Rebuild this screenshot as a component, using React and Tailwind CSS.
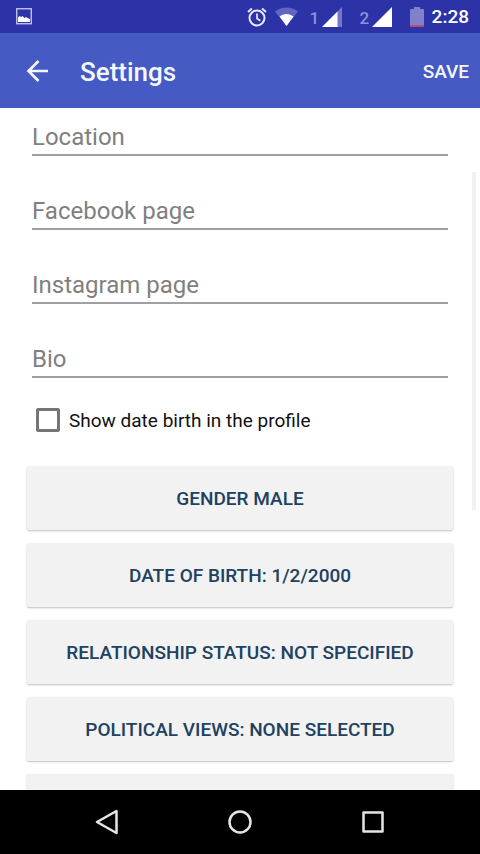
const fields = [
  { id: 'location', label: 'Location' },
  { id: 'facebook', label: 'Facebook page' },
  { id: 'instagram', label: 'Instagram page' },
  { id: 'bio', label: 'Bio' },
];

const options = [
  'Gender Male',
  'Date of birth: 1/2/2000',
  'Relationship status: Not specified',
  'Political views: None selected',
];

function PictureIcon() {
  return (
    <svg width="16" height="17" viewBox="0 0 16 17" aria-hidden="true">
      <rect x="0.75" y="0.75" width="14.5" height="15" fill="none" stroke="#c9cdf0" strokeWidth="1.3" />
      <path d="M2 14V9.500l1.500-1.500 1.500 1L6.500 8l2 2 1.500-1 1.500 1 2.500 1v3z" fill="#fff" />
    </svg>
  );
}

function AlarmIcon() {
  return (
    <svg width="20" height="20" viewBox="0 0 20 20" fill="none" stroke="#e8eaff" aria-hidden="true">
      <circle cx="10" cy="11" r="7.5" strokeWidth="2" />
      <path d="M10 6.5v5l3.4 2.2" strokeWidth="1.7" />
      <path d="M1 5l4-3.5M19 5l-4-3.5" strokeWidth="2" />
    </svg>
  );
}

function WifiIcon() {
  return (
    <svg width="23" height="19" viewBox="0 0 23 19" aria-hidden="true">
      <path d="M0 4.5C6.5-1 16.5-1 23 4.5L11.5 19z" fill="#6065c4" />
      <path d="M4.500 9.600c4-3.600 10-3.600 14 0L11.500 19z" fill="#fff" />
    </svg>
  );
}

function SignalIcon({ full }) {
  return (
    <svg width="20" height="20" viewBox="0 0 20 20" aria-hidden="true">
      <path d="M20 0v20H0z" fill={full ? '#fff' : '#7277cb'} />
      {!full && <path d="M15.500 4.500V20H0z" fill="#fff" />}
    </svg>
  );
}

function BatteryIcon() {
  return (
    <svg width="14" height="20" viewBox="0 0 14 20" aria-hidden="true">
      <path d="M4 0h6v2h3q1 0 1 1v15H0V3q0-1 1-1h3z" fill="#7f82cb" />
      <path d="M0 18h14v1q0 1-1 1H1q-1 0-1-1z" fill="#b4526e" />
    </svg>
  );
}

function StatusBar() {
  return (
    <div className="flex h-[33px] shrink-0 items-center justify-between bg-[#2c33a7] pr-[11px] pl-4 text-white">
      <PictureIcon />
      <div className="flex items-center">
        <AlarmIcon />
        <div className="ml-2 flex"><WifiIcon /></div>
        <div className="ml-3 flex items-center gap-1">
          <span className="w-2 pt-0.5 text-[17px] leading-6 font-medium text-[#8d91dc]">1</span>
          <SignalIcon />
        </div>
        <div className="ml-[18px] flex items-center gap-1">
          <span className="w-2 pt-0.5 text-[17px] leading-6 font-medium text-[#8d91dc]">2</span>
          <SignalIcon full />
        </div>
        <div className="mr-2 ml-[18px] flex"><BatteryIcon /></div>
        <span className="text-[19px] leading-6 font-medium">2:28</span>
      </div>
    </div>
  );
}

function Header() {
  return (
    <header className="flex h-[75px] shrink-0 items-center bg-[#455bc3] pr-[11px] pl-6 text-[#f4f7ff]">
      <button type="button" aria-label="Back" className="flex w-14 items-center">
        <svg width="26" height="26" viewBox="0 0 26 26" fill="none" stroke="#f4f7ff" strokeWidth="2.600" aria-hidden="true">
          <path d="M24 13H5M14.500 3l-10 10 10 10" />
        </svg>
      </button>
      <h1 className="pt-0.5 text-[26px] leading-8 font-medium">Settings</h1>
      <button type="button" className="ml-auto pt-0.5 text-[19px] leading-6 font-medium uppercase">Save</button>
    </header>
  );
}

function NavBar() {
  return (
    <nav className="flex h-16 shrink-0 items-center justify-center gap-[109px] bg-black">
      <button type="button" aria-label="Back">
        <svg width="24" height="26" viewBox="0 0 24 26" fill="none" stroke="#e6e6e6" strokeWidth="2.500" strokeLinejoin="round" aria-hidden="true">
          <path d="M21.500 2v22L2 13z" />
        </svg>
      </button>
      <button type="button" aria-label="Home">
        <svg width="24" height="24" viewBox="0 0 24 24" fill="none" stroke="#e6e6e6" strokeWidth="2.500" aria-hidden="true">
          <circle cx="12" cy="12" r="10.500" />
        </svg>
      </button>
      <button type="button" aria-label="Recent apps">
        <svg width="24" height="24" viewBox="0 0 24 24" fill="none" stroke="#e6e6e6" strokeWidth="2.500" strokeLinejoin="round" aria-hidden="true">
          <rect x="2.500" y="2.500" width="19" height="19" />
        </svg>
      </button>
    </nav>
  );
}

const optionClass =
  'h-16 shrink-0 rounded-xs bg-[#f2f2f2] pt-0.5 text-[19px] leading-6 font-medium text-[#20415f] uppercase shadow-[0_1px_2px_rgba(0,0,0,0.25)]';

export default function App() {
  return (
    <div className="flex h-screen flex-col bg-white font-[Roboto,sans-serif]">
      <StatusBar />
      <Header />
      <main className="relative min-h-0 flex-1 overflow-hidden">
        <form className="pt-3">
          <div className="flex flex-col gap-[38px] px-8">
            {fields.map(({ id, label }) => (
              <input
                key={id}
                id={id}
                type="text"
                aria-label={label}
                placeholder={label}
                className="h-9 w-full border-b-2 border-[#a0a0a0] text-2xl text-black outline-none placeholder:text-[#808080]"
              />
            ))}
          </div>
          <label className="mt-[30px] flex h-6 items-center gap-[9px] px-9 text-[19px] leading-6 text-[#111]">
            <input type="checkbox" className="size-6 appearance-none rounded-xs border-[3px] border-[#757575] checked:bg-[#757575]" />
            <span className="pt-0.5">Show date birth in the profile</span>
          </label>
          <div className="mt-[34px] flex flex-col gap-[13px] px-[27px]">
            {options.map((text) => (
              <button key={text} type="button" className={optionClass}>{text}</button>
            ))}
            <button type="button" aria-label="More options" className={optionClass} />
          </div>
        </form>
        <div className="absolute top-16 right-1 h-[338px] w-1 bg-[#f0f0f0]" />
      </main>
      <NavBar />
    </div>
  );
}
